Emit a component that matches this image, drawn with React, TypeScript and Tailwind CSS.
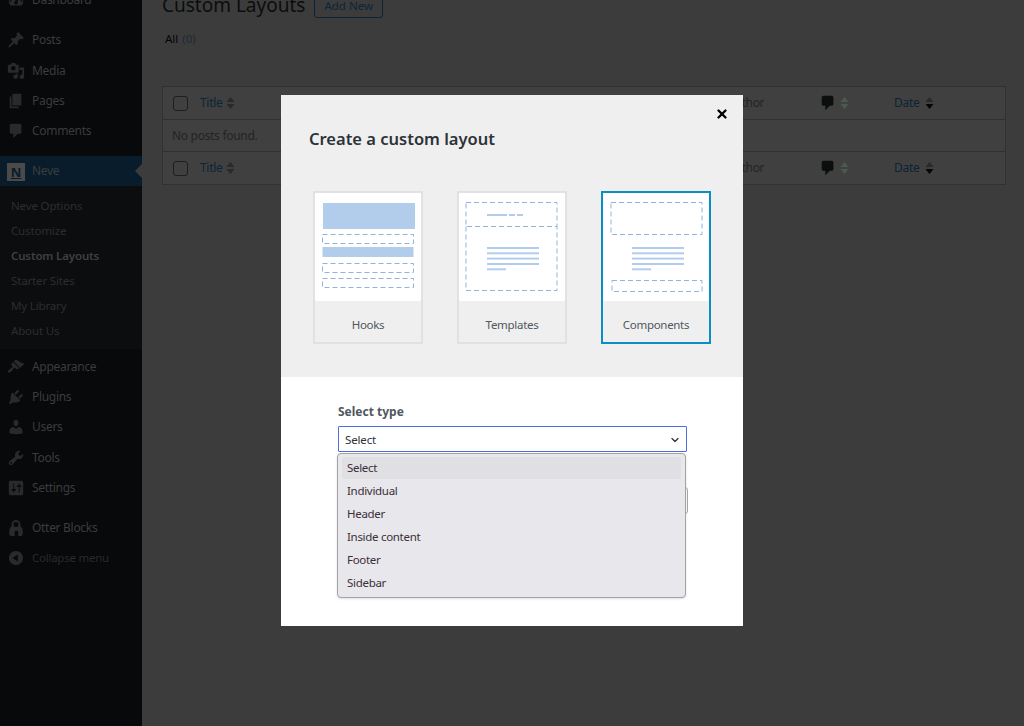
import React from "react";
import { X, ChevronDown } from "lucide-react";

const icons: Record<string, string> = {
  dashboard:
    "M3.76 16h12.48c1.1-1.37 1.76-3.11 1.76-5 0-4.42-3.58-8-8-8s-8 3.58-8 8c0 1.89.66 3.63 1.76 5zM10 4c.55 0 1 .45 1 1s-.45 1-1 1-1-.45-1-1 .45-1 1-1zM6 6c.55 0 1 .45 1 1s-.45 1-1 1-1-.45-1-1 .45-1 1-1zm8 0c.55 0 1 .45 1 1s-.45 1-1 1-1-.45-1-1 .45-1 1-1zm-5.37 5.55L12 7v6c0 1.1-.9 2-2 2s-2-.9-2-2c0-.57.24-1.08.63-1.45zM4 10c.55 0 1 .45 1 1s-.45 1-1 1-1-.45-1-1 .45-1 1-1zm12 0c.55 0 1 .45 1 1s-.45 1-1 1-1-.45-1-1 .45-1 1-1z",
  posts:
    "M10.44 3.02l1.82-1.82 6.36 6.35-1.83 1.82c-1.05-.68-2.48-.57-3.41.36l-.75.75c-.92.93-1.04 2.35-.35 3.41l-1.83 1.82-2.41-2.41-2.8 2.79c-.42.42-3.38 2.71-3.8 2.29s1.86-3.39 2.28-3.81l2.79-2.79L4.1 9.36l1.83-1.82c1.05.69 2.48.57 3.4-.36l.75-.75c.93-.92 1.05-2.35.36-3.41z",
  media:
    "M13 11V4c0-.55-.45-1-1-1h-1.67L9 1H5L3.67 3H2c-.55 0-1 .45-1 1v7c0 .55.45 1 1 1h10c.55 0 1-.45 1-1zM7 4.5c1.38 0 2.5 1.12 2.5 2.5S8.38 9.5 7 9.5 4.5 8.38 4.5 7 5.62 4.5 7 4.5zM14 6h5v10.5c0 1.38-1.12 2.5-2.5 2.5S14 17.88 14 16.5s1.12-2.5 2.5-2.5c.17 0 .34.02.5.05V9h-3V6zm-4 8.05V13h2v3.5c0 1.38-1.12 2.5-2.5 2.5S7 17.88 7 16.5 8.12 14 9.5 14c.17 0 .34.02.5.05z",
  pages: "M6 15V2h10v13H6zm-1 1h8v2H3V5h2v11z",
  comments:
    "M5 2h9c1.1 0 2 .9 2 2v7c0 1.1-.9 2-2 2h-2l-5 5v-5H5c-1.1 0-2-.9-2-2V4c0-1.1.9-2 2-2z",
  appearance:
    "M14.48 11.06L7.41 3.99l1.5-1.5c.5-.56 2.3-.47 3.51.32 1.21.8 1.43 1.28 2.91 2.1 1.18.64 2.45 1.26 4.45.85zm-.71.71L6.7 4.7 4.93 6.47c-.39.39-.39 1.02 0 1.41l1.06 1.06c.39.39.39 1.03 0 1.42-.6.6-1.43 1.11-2.21 1.69-.35.26-.7.53-1.01.84C1.43 13.23.4 14.84 1.33 15.77c.94.94 2.54-.11 3.89-1.44.31-.31.58-.66.84-1.01.58-.78 1.09-1.61 1.69-2.21.39-.39 1.02-.39 1.41 0l1.06 1.06c.39.39 1.02.39 1.41 0z",
  plugins:
    "M13.11 4.36L9.87 7.6 8 5.73l3.24-3.24c.35-.34 1.05-.2 1.56.32.52.51.66 1.21.31 1.55zm-8 1.77l.91-1.12 9.01 9.01-1.19.84c-.71.71-2.63 1.16-3.82 1.16H6.14L4.9 17.26c-.59.59-1.54.59-2.12 0-.59-.58-.59-1.53 0-2.12l1.24-1.24v-3.88c0-1.13.4-3.19 1.09-3.89zm7.26 3.97l3.24-3.24c.34-.35 1.04-.21 1.55.31.52.51.66 1.21.31 1.55l-3.24 3.25z",
  users:
    "M10 9.25c-2.27 0-2.73-3.44-2.73-3.44C7 4.02 7.82 2 9.97 2c2.16 0 2.98 2.02 2.71 3.81 0 0-.41 3.44-2.68 3.44zm0 2.57L12.72 10c2.39 0 4.52 2.33 4.52 4.53v2.49s-3.65 1.13-7.24 1.13c-3.65 0-7.24-1.13-7.24-1.13v-2.49c0-2.25 1.94-4.48 4.47-4.48z",
  tools:
    "M16.68 9.77c-1.34 1.34-3.3 1.67-4.95.99l-5.41 6.52c-.99.99-2.59.99-3.58 0s-.99-2.59 0-3.57l6.52-5.42c-.68-1.65-.35-3.61.99-4.95 1.28-1.28 3.12-1.62 4.72-1.06l-2.89 2.89 2.82 2.82 2.86-2.87c.53 1.58.18 3.39-1.08 4.65zM3.81 16.21c.4.39 1.04.39 1.43 0 .4-.4.4-1.04 0-1.43-.39-.4-1.03-.4-1.43 0-.39.39-.39 1.03 0 1.43z",
  settings:
    "M18 16V4c0-1.1-.9-2-2-2H4c-1.1 0-2 .9-2 2v12c0 1.1.9 2 2 2h12c1.1 0 2-.9 2-2zM8 11h1c.55 0 1 .45 1 1s-.45 1-1 1H8v1.5c0 .28-.22.5-.5.5s-.5-.22-.5-.5V13H6c-.55 0-1-.45-1-1s.45-1 1-1h1V5.5c0-.28.22-.5.5-.5s.5.22.5.5V11zm5-2h-1c-.55 0-1-.45-1-1s.45-1 1-1h1V5.5c0-.28.22-.5.5-.5s.5.22.5.5V7h1c.55 0 1 .45 1 1s-.45 1-1 1h-1v5.5c0 .28-.22.5-.5.5s-.5-.22-.5-.5V9z",
  otter:
    "M10 1a5 5 0 0 1 5 5v2.2c1.5 1 2.5 2.6 2.5 4.8v3c0 1.5-1 3-2.5 3h-2.5v-4.5a1.5 1.5 0 0 0-1.5-1.5h-1a1.5 1.5 0 0 0-1.5 1.5V19H5c-1.5 0-2.5-1.5-2.5-3v-3c0-2.2 1-3.8 2.5-4.8V6a5 5 0 0 1 5-5zM7.5 4.5v3a1 1 0 0 0 1 1h3a1 1 0 0 0 1-1v-3a1 1 0 0 0-1-1h-3a1 1 0 0 0-1 1z",
  collapse:
    "M10 2.16c4.33 0 7.84 3.51 7.84 7.84s-3.51 7.84-7.84 7.84S2.16 14.33 2.16 10 5.71 2.16 10 2.16zm2 11.72V6.12L6.18 9.97z",
};

const Dashicon = ({ name, className }: { name: string; className: string }) => (
  <svg viewBox="0 0 20 20" className={className} fill="currentColor" fillRule="evenodd">
    <path d={icons[name]} />
  </svg>
);

const MenuItem = ({ icon, label }: { icon: string; label: string }) => (
  <div className="flex h-[30.3px] items-center text-[#3c3c3c]">
    <Dashicon name={icon} className="ml-[7px] h-[18px] w-[18px] text-[#2a2a2b]" />
    <span className="ml-[7px] text-[12px] tracking-[-0.3px]">{label}</span>
  </div>
);

const SortArrows = ({ active = false, light = false }: { active?: boolean; light?: boolean }) => (
  <svg viewBox="0 0 8 14" className="h-[14px] w-[9px]">
    <path d="M4 1l4 5H0z" fill={light ? "#4a5a4e" : "#2a2a2b"} />
    <path d="M4 13L0 8h8z" fill={active ? "#050505" : light ? "#4a5a4e" : "#2a2a2b"} />
  </svg>
);

const TableRow = ({ className }: { className: string }) => (
  <div className={`flex items-center text-[12px] tracking-[-0.3px] ${className}`}>
    <div className="ml-[10px] h-[15px] w-[15px] rounded-[3px] border border-[#1c1e20]" />
    <div className="ml-[12px] flex w-[527px] items-center gap-[4px] text-[#0c2436]">
      Title
      <SortArrows />
    </div>
    <div className="w-[92px] text-[#222426]">Author</div>
    <div className="flex w-[75px] items-center gap-[3px]">
      <Dashicon name="comments" className="h-[18px] w-[18px] text-[#0b0d0e]" />
      <SortArrows light />
    </div>
    <div className="flex items-center gap-[6px] text-[#0c2436]">
      Date
      <SortArrows active />
    </div>
  </div>
);

const Line = ({ x, y, w }: { x: number; y: number; w: number }) => (
  <rect x={x} y={y} width={w} height={2} fill="#b2cdeb" />
);

const Dashed = ({ x, y, w, h }: { x: number; y: number; w: number; h: number }) => (
  <rect x={x} y={y} width={w} height={h} fill="none" stroke="#8fb4e0" strokeWidth={1} strokeDasharray="5 3" />
);

const Paragraph = ({ x }: { x: number }) => (
  <>
    <Line x={x} y={54} w={52} />
    <Line x={x} y={59.3} w={52} />
    <Line x={x} y={64.6} w={52} />
    <Line x={x} y={70} w={52} />
    <Line x={x} y={75.3} w={19} />
  </>
);

const Card = ({
  label,
  selected = false,
  children,
}: {
  label: string;
  selected?: boolean;
  children: React.ReactNode;
}) => (
  <div className={`flex h-[153px] w-[110px] flex-col border-2 ${selected ? "border-[#0b8fc3]" : "border-[#e1e1e1]"}`}>
    <svg viewBox="0 0 106 108" className="h-[108px] w-[106px] bg-white">
      {children}
    </svg>
    <div className="flex flex-1 items-center justify-center pt-[7px] text-[11.5px] tracking-[-0.3px] text-[#50575e]">
      {label}
    </div>
  </div>
);

const menuTop = [
  ["posts", "Posts"],
  ["media", "Media"],
  ["pages", "Pages"],
  ["comments", "Comments"],
];
const subItems = ["Neve Options", "Customize", "Custom Layouts", "Starter Sites", "My Library", "About Us"];
const menuBottom = [
  ["appearance", "Appearance"],
  ["plugins", "Plugins"],
  ["users", "Users"],
  ["tools", "Tools"],
  ["settings", "Settings"],
];
const options = ["Select", "Individual", "Header", "Inside content", "Footer", "Sidebar"];

export default function App() {
  return (
    <div className="relative flex h-[726px] w-[1024px] overflow-hidden bg-[#3c3c3c] font-['Noto_Sans',sans-serif]">
      {/* admin sidebar */}
      <div className="h-full w-[142px] shrink-0 bg-[#07090a]">
        <div className="-mt-[15px] mb-[10px]">
          <MenuItem icon="dashboard" label="Dashboard" />
        </div>
        {menuTop.map(([icon, label]) => (
          <MenuItem key={label} icon={icon} label={label} />
        ))}
        <div className="relative mt-[9.5px] flex h-[30px] items-center bg-[#081c2c] text-[#3c3c3c]">
          <div className="ml-[7px] mt-[3px] flex h-[18px] w-[18px] items-center justify-center bg-[#4c4a48] text-[13px] font-bold leading-none text-[#081c2c] underline">
            N
          </div>
          <span className="ml-[7px] text-[12px] tracking-[-0.3px]">Neve</span>
          <div className="absolute right-0 top-[8px] h-0 w-0 border-y-[7px] border-r-[7px] border-y-transparent border-r-[#3c3c3c]" />
        </div>
        <div className="bg-[#0b0d0e] pb-[6.5px] pt-[7px]">
          {subItems.map((item) => (
            <div
              key={item}
              className={`flex h-[25px] items-center pl-[11px] text-[11.5px] tracking-[-0.15px] ${
                item === "Custom Layouts" ? "font-semibold text-[#404040]" : "text-[#2d2e2f]"
              }`}
            >
              {item}
            </div>
          ))}
        </div>
        <div className="pt-[2px]">
          {menuBottom.map(([icon, label]) => (
            <MenuItem key={label} icon={icon} label={label} />
          ))}
        </div>
        <div className="mt-[9.5px]">
          <MenuItem icon="otter" label="Otter Blocks" />
          <div className="flex h-[30.3px] items-center text-[#2a2a2b]">
            <Dashicon name="collapse" className="ml-[7px] h-[18px] w-[18px]" />
            <span className="ml-[7px] text-[11.5px] tracking-[-0.25px]">Collapse menu</span>
          </div>
        </div>
      </div>

      {/* page behind the modal */}
      <div className="flex-1 pl-[20px] pr-[18px]">
        <div className="-mt-[9px] flex h-[28px] items-center gap-[9px]">
          <h1 className="text-[19px] leading-none text-[#0b0d0e]">Custom Layouts</h1>
          <div className="rounded-[3px] border border-[#0c2436] px-[9px] py-[3px] text-[11.5px] leading-[17px] text-[#0c2436]">
            Add New
          </div>
        </div>
        <div className="mt-[11px] flex h-[18px] items-center pl-[3px] text-[11.5px]">
          <span className="text-[#050505]">All</span>
          <span className="ml-[4px] text-[#1c2a34]">(0)</span>
        </div>
        <div className="mt-[38px] border border-[#313132] bg-[#404040]">
          <TableRow className="h-[33px] border-b border-[#313132]" />
          <div className="flex h-[32px] items-center border-b border-[#313132] pl-[9px] text-[12px] tracking-[-0.3px] text-[#222426]">
            No posts found.
          </div>
          <TableRow className="h-[32px]" />
        </div>
      </div>

      {/* create layout modal */}
      <div className="absolute left-[281px] top-[95px] flex h-[531px] w-[462px] flex-col bg-white">
        <div className="relative h-[282px] bg-[#efefef] px-[32px] pt-[31px]">
          <X className="absolute right-[14px] top-[12px] h-[14px] w-[14px] text-black" strokeWidth={4} />
          <h2 className="-ml-[4px] text-[16.5px] font-semibold leading-[26px] text-[#2c3338]">Create a custom layout</h2>
          <div className="mt-[39px] flex justify-between">
            <Card label="Hooks">
              <rect x={8} y={10} width={92} height={26} fill="#b2cdeb" />
              <Dashed x={7.5} y={41.5} w={91} h={9} />
              <rect x={7.5} y={54} width={91} height={10} fill="#b2cdeb" />
              <Dashed x={7.5} y={70.5} w={91} h={9} />
              <Dashed x={7.5} y={85.5} w={91} h={9} />
            </Card>
            <Card label="Templates">
              <Dashed x={7} y={9.5} w={91} h={24} />
              <path
                d="M7 33.5V97.5H98V33.5"
                fill="none"
                stroke="#8fb4e0"
                strokeWidth={1}
                strokeDasharray="5 3"
              />
              <Line x={28} y={21} w={20} />
              <Line x={50} y={21} w={6} />
              <Line x={58} y={21} w={6} />
              <Paragraph x={28} />
            </Card>
            <Card label="Components" selected>
              <Dashed x={8} y={9.5} w={91} h={32} />
              <Paragraph x={29} />
              <Dashed x={9} y={87.5} w={90} h={11} />
            </Card>
          </div>
        </div>

        <div className="relative flex-1 pl-[57px] pr-[55px] pt-[26px]">
          <label className="block text-[12px] font-bold leading-[18px] text-[#50575e]">Select type</label>
          <div className="mt-[5px] flex h-[26px] w-[349px] items-center justify-between rounded-[1px] border border-[#4a6ee0] bg-white pl-[6px] pr-[5px] pt-[1px] text-[11.5px] tracking-[-0.15px] text-[#2c3338]">
            Select
            <ChevronDown className="h-[12px] w-[12px] text-[#2c3338]" strokeWidth={2.5} />
          </div>
          <div className="mt-[35px] h-[27px] w-[350px] rounded-[3px] border border-[#a8a8a8]" />

          <div className="absolute left-[56px] top-[76px] h-[145px] w-[349px] rounded-[4px] border border-[#a3a3a6] bg-[#e8e7eb] px-[4px] pt-[2.5px] text-[11.5px] tracking-[-0.3px] text-[#3a2f3a] shadow-sm">
            {options.map((option, i) => (
              <div
                key={option}
                className={`flex h-[22.9px] items-center rounded-[2px] pl-[5px] ${i === 0 ? "bg-[#e0dfe4]" : ""}`}
              >
                {option}
              </div>
            ))}
          </div>
        </div>
      </div>
    </div>
  );
}
